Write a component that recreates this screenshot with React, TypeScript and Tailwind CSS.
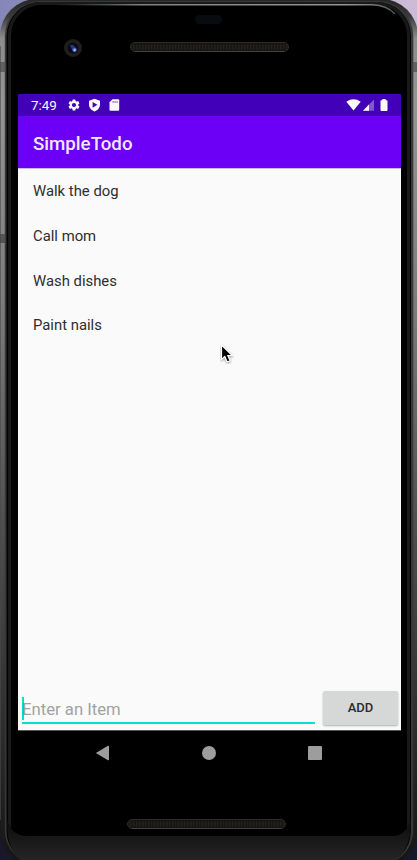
import React from "react";

const todos = ["Walk the dog", "Call mom", "Wash dishes", "Paint nails"];

function PhoneBody() {
  return (
    <svg className="absolute inset-0" width="417" height="860" viewBox="0 0 417 860" aria-hidden="true">
      <defs>
        <linearGradient id="edge" x1="0" y1="0" x2="0" y2="1">
          <stop offset="0" stopColor="#262626" />
          <stop offset="0.02" stopColor="#3a3a3a" />
          <stop offset="0.045" stopColor="#8c8c8c" />
          <stop offset="0.12" stopColor="#959595" />
          <stop offset="0.35" stopColor="#7c7c7c" />
          <stop offset="0.6" stopColor="#505050" />
          <stop offset="0.8" stopColor="#343434" />
          <stop offset="1" stopColor="#141414" />
        </linearGradient>
        <linearGradient id="wall" x1="0" y1="0" x2="1" y2="0">
          <stop offset="0" stopColor="#8587b8" />
          <stop offset="1" stopColor="#cdbbd6" />
        </linearGradient>
        <linearGradient id="chin" x1="0" y1="0" x2="0" y2="1">
          <stop offset="0" stopColor="#0c0c0c" />
          <stop offset="0.4" stopColor="#161616" />
          <stop offset="1" stopColor="#252525" />
        </linearGradient>
        <linearGradient id="shine" x1="0" y1="0" x2="1" y2="0">
          <stop offset="0" stopColor="#68706e" stopOpacity="0" />
          <stop offset="0.25" stopColor="#7c8583" />
          <stop offset="0.85" stopColor="#8d9694" />
          <stop offset="1" stopColor="#aaa" stopOpacity="0.5" />
        </linearGradient>
      </defs>
      <rect width="417" height="430" fill="url(#wall)" />
      <rect y="430" width="417" height="430" fill="#17182a" />
      <rect x="0" y="-1" width="418" height="868" rx="37" fill="url(#edge)" />
      <path d="M0.5 46V820" stroke="#4a4a4a" strokeOpacity="0.6" />
      <rect x="4.8" y="1" width="408.5" height="864" rx="35" fill="#383838" />
      <rect x="6.5" y="2" width="404.5" height="863" rx="34" fill="#030303" />
      <rect x="9.5" y="3.5" width="399" height="859" rx="32" fill="#000" stroke="#191919" strokeWidth="3" />
      <path d="M7 820Q12 836 27 836H393Q405 836 411 820Q411 848 396 860H20Q7 850 7 820Z" fill="url(#chin)" />
      <rect x="12" y="780" width="393" height="53" rx="16" fill="#000" />
      <path d="M56 4.8H372Q387 5.2 395 14" fill="none" stroke="url(#shine)" strokeWidth="1.6" />
      <rect x="0" y="62" width="6" height="10" fill="#484848" fillOpacity="0.65" />
      <rect x="412" y="62" width="5" height="10" fill="#484848" fillOpacity="0.65" />
      <rect x="0" y="234" width="6" height="9" fill="#3c3c3c" fillOpacity="0.65" />
    </svg>
  );
}

function Speaker({ id }: { id: string }) {
  return (
    <svg width="159" height="10" viewBox="0 0 159 10" aria-hidden="true">
      <defs>
        <pattern id={id} width="3" height="10" patternUnits="userSpaceOnUse">
          <rect width="3" height="10" fill="#161513" />
          <rect width="1.4" height="5" y="2.5" fill="#24221f" />
        </pattern>
      </defs>
      <rect x="0.5" y="0.5" width="158" height="9" rx="4.5" fill={`url(#${id})`} stroke="#2d2c29" />
      <path d="M5 9.5H154" stroke="#45433e" />
    </svg>
  );
}

function FrontCamera() {
  return (
    <svg width="18" height="18" viewBox="0 0 18 18" aria-hidden="true">
      <circle cx="9" cy="9" r="9" fill="#1f1e1d" />
      <circle cx="9" cy="9" r="5.3" fill="#080a16" />
      <path d="M6 6L9 6L13 10L10 13L7 9Z" fill="#26387f" />
      <circle cx="10.5" cy="11" r="2.1" fill="#5070d0" />
      <circle cx="10.7" cy="11" r="1" fill="#b5c9ff" />
    </svg>
  );
}

function StatusBar() {
  return (
    <div className="flex h-[22px] items-center bg-[#4200b8] pl-[13px] pr-[13px] text-[#fafafa]">
      <span className="w-[35px] pt-px text-[13.4px] leading-none">7:49</span>
      <svg className="ml-px" width="14" height="14" viewBox="0 0 24 24" fill="currentColor">
        <path d="M19.14 12.94c.04-.3.06-.61.06-.94s-.02-.64-.07-.94l2.03-1.58a.49.49 0 0 0 .12-.61l-1.92-3.32a.49.49 0 0 0-.59-.22l-2.39.96c-.5-.38-1.03-.7-1.62-.94L14.4 2.81a.48.48 0 0 0-.48-.41h-3.84c-.24 0-.43.17-.47.41l-.36 2.54c-.59.24-1.13.57-1.62.94l-2.39-.96a.48.48 0 0 0-.59.22L2.74 8.87c-.12.21-.08.47.12.61l2.03 1.58c-.05.3-.09.63-.09.94s.02.64.07.94l-2.03 1.58a.49.49 0 0 0-.12.61l1.92 3.32c.12.22.37.29.59.22l2.39-.96c.5.38 1.03.7 1.62.94l.36 2.54c.05.24.24.41.48.41h3.84c.24 0 .44-.17.47-.41l.36-2.54c.59-.24 1.13-.56 1.62-.94l2.39.96c.22.08.47 0 .59-.22l1.92-3.32a.48.48 0 0 0-.12-.61l-2.01-1.58zM12 15.6a3.6 3.6 0 1 1 0-7.2 3.6 3.6 0 0 1 0 7.2z" />
      </svg>
      <svg className="ml-[7px]" width="13" height="14" viewBox="0 0 13 14">
        <path d="M6.5 0.7L12 2.8V6.5C12 9.8 9.7 12.4 6.5 13.4C3.3 12.4 1 9.8 1 6.5V2.8Z" fill="currentColor" />
        <path d="M4.6 3.9L9.4 6.8L4.6 9.7Z" fill="#4200b8" />
      </svg>
      <svg className="ml-[8px]" width="11" height="12" viewBox="0 0 11 12">
        <path d="M3.5 0.3H9.2Q10.2 0.3 10.2 1.3V10.7Q10.2 11.7 9.2 11.7H1.5Q0.5 11.7 0.5 10.7V3.3Z" fill="currentColor" />
        <path d="M4.1 2V4M6.1 2V4M8.1 2V4" stroke="#4200b8" strokeOpacity="0.65" />
      </svg>
      <div className="grow" />
      <svg width="15" height="12" viewBox="0 0 15 12">
        <path d="M0.3 2.7Q7.5 -2.1 14.7 2.7L7.5 11.5Z" fill="currentColor" />
      </svg>
      <svg className="ml-px" width="13" height="12" viewBox="0 0 13 12">
        <path d="M1 11.7L12 0.5V11.7Z" fill="currentColor" fillOpacity="0.35" />
        <path d="M1 11.7L7 5.6V11.7Z" fill="currentColor" />
      </svg>
      <svg className="ml-[5px]" width="8" height="12" viewBox="0 0 8 12">
        <path d="M2.3 0H5.7V1.2H6.8Q7.5 1.2 7.5 2V11.2Q7.5 12 6.7 12H1.3Q0.5 12 0.5 11.2V2Q0.5 1.2 1.2 1.2H2.3Z" fill="currentColor" />
      </svg>
    </div>
  );
}

export default function App() {
  return (
    <main className="relative h-[860px] w-[417px] overflow-hidden bg-black font-['Roboto',sans-serif]">
      <PhoneBody />
      <div className="relative flex h-full flex-col pl-[18px] pr-[16px]">
        <header className="flex h-[94px] flex-col">
          <div className="ml-[177px] mt-[15px] h-[9px] w-[27px] rounded-full bg-[#080b10]" />
          <div className="mt-[15px] flex h-[18px] items-center pl-[46px]">
            <FrontCamera />
            <div className="ml-[48px] -mt-[2px] flex">
              <Speaker id="earpiece" />
            </div>
          </div>
        </header>

        <section className="flex h-[637px] flex-col border-b border-[#555] bg-[#fafafa]">
          <StatusBar />
          <div className="flex h-[52px] items-center bg-[#6c00f7] pl-[15px] pt-[4px]">
            <h1 className="text-[18.7px] font-medium text-[#f0e8ff]">SimpleTodo</h1>
          </div>
          <div className="h-px bg-[#cfb8ee]" />
          <ul className="grow pt-[0.2px]">
            {todos.map((item) => (
              <li key={item} className="flex h-[44.7px] items-center pl-[15px] text-[14.85px] text-[#2e2e2e]">
                {item}
              </li>
            ))}
          </ul>
          <div className="flex h-[40px] pl-[4px] pr-[3px]">
            <div className="mt-[7px] flex h-[27px] w-[293px] items-start border-b-2 border-[#00e0cb]">
              <span className="-mr-[2px] h-[23px] w-[2px] bg-[#00e0cb]" />
              <span className="text-[16.7px] leading-[26px] text-[#a2a2a2]">Enter an Item</span>
            </div>
            <button className="ml-[8px] mt-[1px] h-[34px] w-[75px] rounded-[2px] bg-[#d6d8d7] text-[13px] font-medium text-[#2a2a2a] shadow-[0_1px_2px_rgba(0,0,0,0.3)]">
              ADD
            </button>
          </div>
        </section>

        <nav className="flex h-[43px] items-center pl-[77px]">
          <svg width="15" height="16" viewBox="0 0 15 16">
            <path d="M0.8 8L13 0.8Q14 0.3 14 1.4V14.6Q14 15.7 13 15.2Z" fill="#9d9d9d" />
          </svg>
          <span className="ml-[92px] size-[14px] rounded-full bg-[#9d9d9d]" />
          <span className="ml-[92px] size-[14px] rounded-[1px] bg-[#9d9d9d]" />
        </nav>
        <div className="ml-[109px] mt-[45px] flex">
          <Speaker id="bottom-speaker" />
        </div>
      </div>

      <svg className="absolute left-[220px] top-[344px]" width="14" height="20" viewBox="0 0 14 20" aria-hidden="true">
        <path d="M1.5 1V15.5L4.8 12.6L7.2 18L10.2 16.7L7.8 11.5H12.3Z" fill="#000" stroke="#fff" strokeWidth="1.2" className="drop-shadow-[0_1px_1px_rgba(0,0,0,0.4)]" />
      </svg>
    </main>
  );
}
